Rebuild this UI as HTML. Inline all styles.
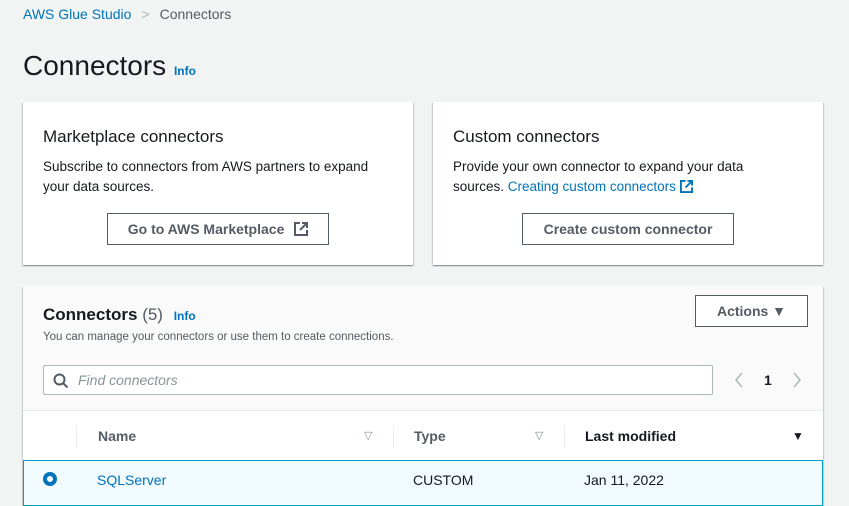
<!DOCTYPE html>
<html><head><meta charset="utf-8"><style>
*{box-sizing:border-box;margin:0;padding:0}
body{width:849px;height:500px;overflow:hidden;background:#f2f3f3;font-family:"Liberation Sans",sans-serif;color:#16191f;position:relative}
.a{position:absolute}
.link{color:#0073bb}
.card{position:absolute;background:#fff;box-shadow:0 1px 1px 0 rgba(0,28,36,.3),1px 1px 1px 0 rgba(0,28,36,.15),-1px 1px 1px 0 rgba(0,28,36,.15)}
.btn{position:absolute;border:1px solid #545b64;background:#fff;color:#545b64;font-weight:bold;font-size:14px;text-align:center;line-height:30px}
</style></head><body>
<div class="a" style="left:23px;top:6px;font-size:14px"><span class="link">AWS Glue Studio</span><span style="color:#aab7b8;margin:0 10px">&gt;</span><span style="color:#545b64">Connectors</span></div>
<div class="a" style="left:23px;top:50px;font-size:28px;">Connectors <span class="link" style="font-size:12px;font-weight:bold">Info</span></div>

<div class="card" style="left:23px;top:102px;width:390px;height:163px">
<div class="a" style="left:20px;top:25px;font-size:17px">Marketplace connectors</div>
<div class="a" style="left:20px;top:55px;font-size:13.5px;line-height:20px;width:350px">Subscribe to connectors from AWS partners to expand your data sources.</div>
<div class="btn" style="left:84px;top:111px;width:222px;height:32px">Go to AWS Marketplace <svg width="14" height="14" viewBox="0 0 14 14" style="vertical-align:-2px;margin-left:6px"><path d="M6 1H1v12h12V8M8 1h5v5M13 1L6 8" fill="none" stroke="#545b64" stroke-width="2"/></svg></div>
</div>

<div class="card" style="left:433px;top:102px;width:390px;height:163px">
<div class="a" style="left:20px;top:25px;font-size:17px">Custom connectors</div>
<div class="a" style="left:20px;top:55px;font-size:13.5px;line-height:20px;width:320px">Provide your own connector to expand your data sources. <span class="link">Creating custom connectors <svg width="13" height="13" viewBox="0 0 14 14" style="vertical-align:-2px"><path d="M6 1H1v12h12V8M8 1h5v5M13 1L6 8" fill="none" stroke="#0073bb" stroke-width="2"/></svg></span></div>
<div class="btn" style="left:89px;top:111px;width:212px;height:32px">Create custom connector</div>
</div>

<div class="card" style="left:23px;top:286px;width:800px;height:220px;background:#fafafa">
<div class="a" style="left:20px;top:19px;font-size:17px;font-weight:bold">Connectors <span style="font-weight:normal;color:#545b64">(5)</span> <span class="link" style="font-size:12px;margin-left:6px">Info</span></div>
<div class="a" style="left:20px;top:45px;font-size:11.5px;color:#545b64">You can manage your connectors or use them to create connections.</div>
<div class="btn" style="left:672px;top:9px;width:113px;height:32px">Actions &#9660;</div>
<div class="a" style="left:20px;top:79px;width:670px;height:30px;background:#fff;border:1px solid #aab7b8;border-radius:2px">
<svg class="a" style="left:9px;top:7px" width="16" height="16" viewBox="0 0 16 16"><circle cx="6.5" cy="6.5" r="5" fill="none" stroke="#545b64" stroke-width="2"/><path d="M10 10l4.5 4.5" stroke="#545b64" stroke-width="2"/></svg>
<span class="a" style="left:34px;top:6px;font-size:14px;font-style:italic;color:#879596">Find connectors</span></div>
<svg class="a" style="left:710px;top:86px" width="12" height="16" viewBox="0 0 12 16"><path d="M9 1L3 8l6 7" fill="none" stroke="#aab7b8" stroke-width="1.5"/></svg>
<div class="a" style="left:741px;top:86px;font-size:14px;font-weight:bold">1</div>
<svg class="a" style="left:768px;top:86px" width="12" height="16" viewBox="0 0 12 16"><path d="M3 1l6 7-6 7" fill="none" stroke="#aab7b8" stroke-width="1.5"/></svg>
<div class="a" style="left:0;top:124px;width:800px;height:1px;background:#eaeded"></div>
<div class="a" style="left:0;top:125px;width:800px;height:50px;background:#fff"></div>
<div class="a" style="left:53px;top:140px;width:1px;height:22px;background:#eaeded"></div>
<div class="a" style="left:370px;top:140px;width:1px;height:22px;background:#eaeded"></div>
<div class="a" style="left:541px;top:140px;width:1px;height:22px;background:#eaeded"></div>
<div class="a" style="left:75px;top:142px;font-size:14px;font-weight:bold;color:#545b64">Name</div>
<div class="a" style="left:341px;top:143px;font-size:11px;color:#879596">&#9661;</div>
<div class="a" style="left:391px;top:142px;font-size:14px;font-weight:bold;color:#545b64">Type</div>
<div class="a" style="left:512px;top:143px;font-size:11px;color:#879596">&#9661;</div>
<div class="a" style="left:562px;top:142px;font-size:14px;font-weight:bold">Last modified</div>
<div class="a" style="left:769px;top:143px;font-size:12px">&#9660;</div>
<div class="a" style="left:0;top:174px;width:800px;height:46px;background:#f1faff;border:1px solid #00a1c9"></div>
<div class="a" style="left:20px;top:186px;width:14px;height:14px;border-radius:50%;border:4px solid #0073bb;background:#fff"></div>
<div class="a" style="left:74px;top:186px;font-size:14px" ><span class="link">SQLServer</span></div>
<div class="a" style="left:390px;top:186px;font-size:14px">CUSTOM</div>
<div class="a" style="left:561px;top:186px;font-size:14px">Jan 11, 2022</div>
</div>
</body></html>
